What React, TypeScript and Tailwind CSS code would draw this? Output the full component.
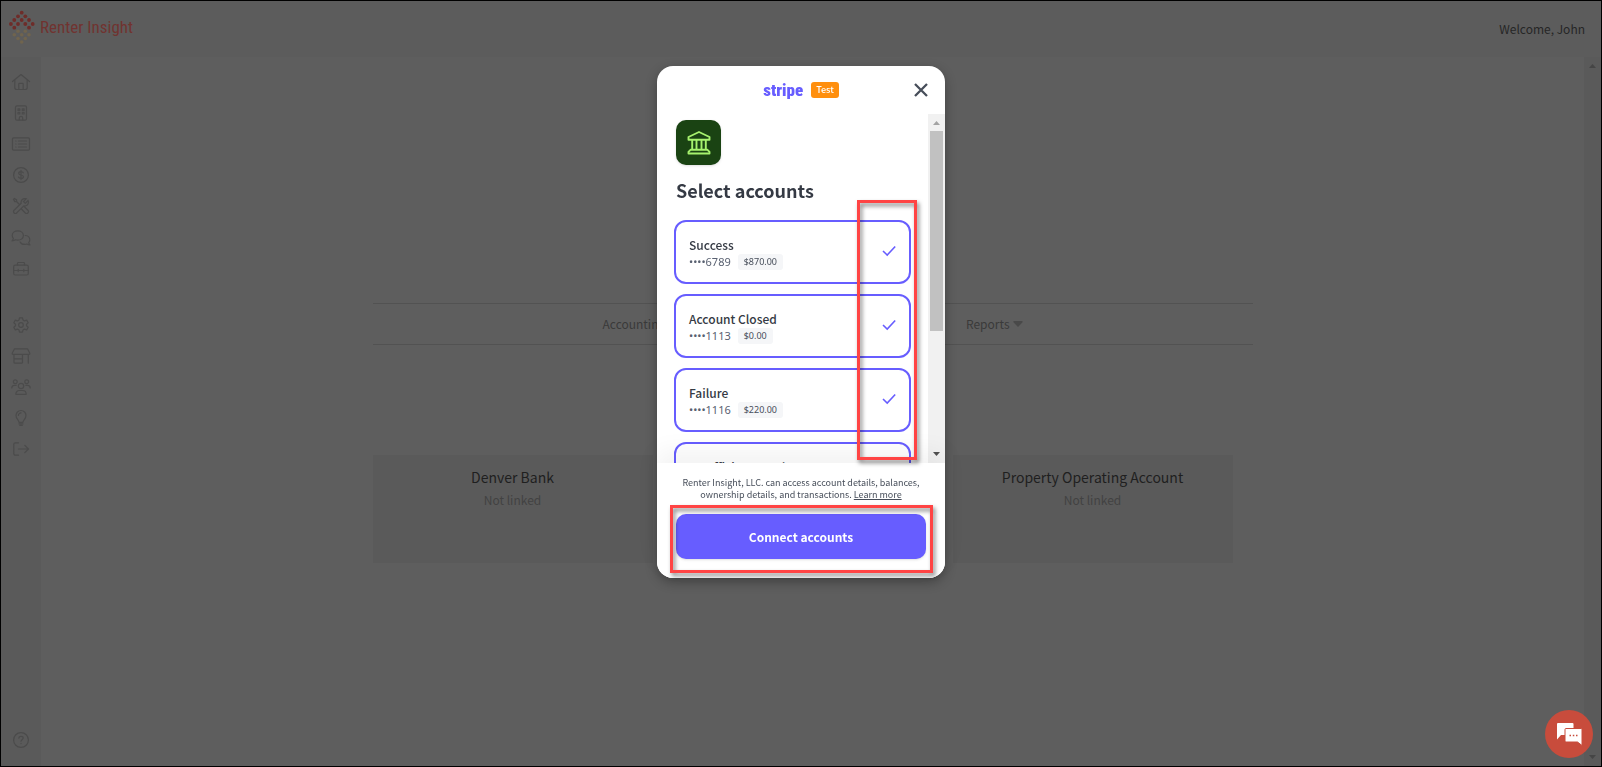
import type { ReactNode } from 'react';
import { LiaToolsSolid } from 'react-icons/lia';

const Icon = ({ children }: { children: ReactNode }) => (
    <svg
        viewBox="0 0 20 20"
        className="w-5 h-5"
        fill="none"
        stroke="currentColor"
        strokeWidth="1.2"
        strokeLinecap="round"
        strokeLinejoin="round"
        aria-hidden="true"
    >
        {children}
    </svg>
);

const mainItems = [
    {
        key: 'Home',
        icon: <Icon><path d="M1.5 9.5 10 2.5l8.5 7M3.8 8v7.5a2 2 0 0 0 2 2h8.4a2 2 0 0 0 2-2V8M7.8 17.3v-5.3a.7.7 0 0 1 .7-.7h3a.7.7 0 0 1 .7.7v5.3" /></Icon>
    },
    {
        key: 'Properties',
        icon: (
            <Icon>
                <rect x="4.5" y="2.8" width="11" height="14.4" rx="1.5" />
                <path d="M7 5.8h1.8v1.6H7zM11.3 5.8h1.8v1.6h-1.8zM7 9.4h1.8V11H7zM11.3 9.4h1.8V11h-1.8zM8.3 17v-2a1.7 1.7 0 0 1 3.4 0v2" />
            </Icon>
        )
    },
    {
        key: 'Listings',
        icon: (
            <Icon>
                <rect x="1.5" y="3.8" width="17" height="12.4" rx="1.2" />
                <path d="M4.8 7h.2M4.8 10h.2M4.8 13h.2M7.5 7h8M7.5 10h8M7.5 13h8" />
            </Icon>
        )
    },
    {
        key: 'Payments',
        icon: (
            <Icon>
                <circle cx="10" cy="10" r="7.4" />
                <path d="M12.3 7.8c-.4-.8-1.2-1.2-2.3-1.2-1.3 0-2.3.6-2.3 1.7 0 2.3 4.8 1.2 4.8 3.5 0 1.1-1.1 1.7-2.5 1.7-1.2 0-2.1-.5-2.5-1.4M10 5.4v9.2" />
            </Icon>
        )
    },
    { key: 'Maintenance', icon: <LiaToolsSolid className="w-5 h-5" /> },
    {
        key: 'Messages',
        icon: (
            <Icon>
                <path d="M6.8 3.8c3.2 0 5.6 2 5.6 4.7s-2.4 4.7-5.6 4.7c-.9 0-1.7-.1-2.4-.4-1 .7-2.2 1-3.4 1 .7-.7 1.2-1.5 1.4-2.5A4.3 4.3 0 0 1 1.2 8.5c0-2.7 2.4-4.7 5.6-4.7z" />
                <path d="M14.2 8.5c2.6.2 4.6 2 4.6 4.3 0 1.1-.4 2-1.1 2.8.2 1 .6 1.7 1.3 2.3-1.1 0-2.2-.3-3.1-.9-.7.3-1.4.4-2.2.4-2.1 0-3.9-1-4.6-2.5" />
            </Icon>
        )
    },
    {
        key: 'Vendors',
        icon: (
            <Icon>
                <rect x="2.7" y="7.2" width="14.6" height="9.8" rx="1.5" />
                <path d="M6.5 7V5.3a.8.8 0 0 1 .8-.8h5.4a.8.8 0 0 1 .8.8V7M2.8 12.5h3.5M8 12.5h4M13.7 12.5h3.5M7.2 11.4v2.2M12.8 11.4v2.2" />
            </Icon>
        )
    }
];

const adminItems = [
    {
        key: 'Settings',
        icon: (
            <Icon>
                <circle cx="10" cy="10" r="2.3" />
                <path d="M8.5 2.8h3l.5 2.2 1.5.9 2.2-.8 1.5 2.6-1.7 1.5v1.6l1.7 1.5-1.5 2.6-2.2-.8-1.5.9-.5 2.2h-3L8 15l-1.5-.9-2.2.8-1.5-2.6 1.7-1.5V9.2L2.8 7.7l1.5-2.6 2.2.8L8 5z" />
            </Icon>
        )
    },
    {
        key: 'Store',
        icon: <Icon><path d="M3.5 2.8h13l2.3 4.4a.8.8 0 0 1-.7 1.2H1.9a.8.8 0 0 1-.7-1.2zM3 8.5v7.7a1 1 0 0 0 1 1h6.5a1 1 0 0 0 1-1V8.5M3 12.8h8.5M17.3 8.5v8.7" /></Icon>
    },
    {
        key: 'Users',
        icon: (
            <Icon>
                <circle cx="10" cy="9" r="2.7" />
                <circle cx="4.3" cy="4.8" r="1.9" />
                <circle cx="15.7" cy="4.8" r="1.9" />
                <path d="M4.8 17.3c0-2.4 1.6-3.8 3.5-3.8h3.4c1.9 0 3.5 1.4 3.5 3.8zM.8 11c0-1.7 1.2-2.7 2.7-2.7h1.7M19.2 11c0-1.7-1.2-2.7-2.7-2.7h-1.7" />
            </Icon>
        )
    },
    {
        key: 'Ideas',
        icon: <Icon><path d="M8 14.3c0-2.2-3-3.5-3-6.8a5 5 0 0 1 10 0c0 3.3-3 4.6-3 6.8zM8 15.8h4M8.8 17.4h2.4M7.4 7.5A2.6 2.6 0 0 1 10 4.9" /></Icon>
    },
    {
        key: 'Log out',
        icon: <Icon><path d="M7.5 3.8H4.3a1.5 1.5 0 0 0-1.5 1.5v9.4a1.5 1.5 0 0 0 1.5 1.5h3.2M7.5 10h10M13.8 6.3l3.7 3.7-3.7 3.7" /></Icon>
    }
];

const helpItem = {
    key: 'Help',
    icon: (
        <Icon>
            <circle cx="10" cy="10" r="7.4" />
            <path d="M7.9 8.2c0-1.2 1-1.9 2.1-1.9 1.2 0 2.2.7 2.2 1.8 0 1.5-2.2 1.6-2.2 3.1M10 13.4v.2" />
        </Icon>
    )
};

const bankAccounts = [
    { name: 'Denver Bank', status: 'Not linked' },
    // sits behind the dialog
    { name: '', status: '' },
    { name: 'Property Operating Account', status: 'Not linked' }
];

const stripeAccounts: { name: string; last4?: string; balance?: string }[] = [
    { name: 'Success', last4: '6789', balance: '$870.00' },
    { name: 'Account Closed', last4: '1113', balance: '$0.00' },
    { name: 'Failure', last4: '1116', balance: '$220.00' },
    { name: 'Insufficient Funds' }
];

// [x, y] of each dot in the diamond, red on top and tan below
const redDots = [
    [12.7, 2.7], [9, 6.3], [16.3, 6.3], [5.3, 10], [12.7, 10], [20, 10],
    [1.9, 14], [9, 14], [16.3, 14], [23.7, 14], [5.3, 17.7], [20, 17.7]
];
const tanDots = [[9, 21.3], [16.3, 21.3], [5.3, 24.7], [12.7, 24.7], [20, 24.7], [9, 28.5], [16.3, 28.5], [12.7, 32]];

const Logo = () => (
    <div className="flex items-center gap-[5px] pb-1">
        <svg viewBox="0 0 26 34" className="w-[26px] h-[34px]" aria-hidden="true">
            {redDots.map(([x, y]) => (
                <circle key={`${x}-${y}`} cx={x} cy={y} r="1.9" fill="#6e2c29" />
            ))}
            {tanDots.map(([x, y]) => (
                <circle key={`${x}-${y}`} cx={x} cy={y} r="1.8" fill="#70644e" />
            ))}
        </svg>
        <span className="font-['Roboto_Condensed',Roboto,sans-serif] text-[17px] leading-6 text-[#713330]">
            Renter Insight
        </span>
    </div>
);

const NavButton = ({ item }: { item: { key: string; icon: ReactNode } }) => (
    <button type="button" aria-label={item.key} className="h-[31px] w-full flex items-center justify-center">
        {item.icon}
    </button>
);

const AccountRow = ({ account }: { account: (typeof stripeAccounts)[number] }) => (
    <label className="flex items-start justify-between h-16 pt-[14px] px-[13px] border-2 border-[#675dff] rounded-xl bg-white">
        <div>
            <div className="text-[12px] leading-[18px] font-medium text-[#353a44]">{account.name}</div>
            {account.last4 && (
                <div className="flex items-center gap-[7px] h-4 font-['Noto_Sans',sans-serif]">
                    <span className="text-[11px] leading-4 text-[#596171]">••••{account.last4}</span>
                    <span className="text-[9px] leading-4 px-[6px] rounded-[3px] bg-[#f5f6f8] text-[#474e5a]">{account.balance}</span>
                </div>
            )}
        </div>
        <input type="checkbox" defaultChecked className="peer sr-only" />
        <svg viewBox="0 0 14 28" className="w-[14px] h-7 invisible peer-checked:visible" fill="none" stroke="#675dff" strokeWidth="1.6" aria-hidden="true">
            <path d="M1 15l4.200 4 8-8.500" />
        </svg>
    </label>
);

const ConnectDialog = () => (
    <div role="dialog" aria-label="Select accounts" className="relative w-72 h-[512px] flex flex-col rounded-2xl bg-white shadow-[0_4px_12px_rgba(0,0,0,0.3)]">
        <div className="h-12 shrink-0 px-[17px] flex items-center justify-between">
            <span className="w-[14px]" />
            <div className="flex items-center gap-2">
                <span className="font-['Roboto_Condensed',Roboto,sans-serif] font-black text-[17px] leading-5 text-[#675dff]">stripe</span>
                <span className="h-4 px-[5px] rounded-[3px] bg-[#ff8f0e] text-white text-[9px] leading-4 font-medium">Test</span>
            </div>
            <button type="button" aria-label="Close">
                <svg viewBox="0 0 14 14" className="w-[14px] h-[14px]" stroke="#474e5a" strokeWidth="2.3" aria-hidden="true">
                    <path d="M1 1l12 12M13 1L1 13" />
                </svg>
            </button>
        </div>

        <div className="flex-1 min-h-0 flex">
            <div className="flex-1 overflow-hidden pt-[6px] px-[17px]">
                <div className="pl-[2px]">
                    <div className="w-[45px] h-[45px] rounded-[10px] bg-[#1a4313] shadow flex items-center justify-center">
                        <svg viewBox="0 0 24 24" className="w-6 h-6" fill="none" stroke="#a6f26e" strokeWidth="1.9" strokeLinejoin="round" aria-hidden="true">
                            <path d="M12 1l10.5 5v2.7h-21V6zM5.2 8.7v9.5M9.500 8.700v9.500M14.500 8.700v9.500M18.800 8.700v9.500M3.500 18.800h17l2 2v1.700h-21v-1.700z" />
                        </svg>
                    </div>
                    <h1 className="mt-[13px] mb-[18px] text-[18px] leading-6 font-bold text-[#353a44]">Select accounts</h1>
                </div>
                <div className="flex flex-col gap-[10px]">
                    {stripeAccounts.map((account) => (
                        <AccountRow key={account.name} account={account} />
                    ))}
                </div>
            </div>

            {/* Scrollbar */}
            <div className="w-[17px] bg-[#f1f1f1] flex flex-col items-center">
                <svg viewBox="0 0 17 17" className="w-[17px] h-[17px]" aria-hidden="true">
                    <path d="M5 11l3.5-4 3.5 4z" fill="#a3a3a3" />
                </svg>
                <div className="w-[13px] h-[200px] bg-[#c1c1c1]" />
                <svg viewBox="0 0 17 17" className="w-[17px] h-[17px] mt-auto" aria-hidden="true">
                    <path d="M5 6l3.5 4 3.5-4z" fill="#505050" />
                </svg>
            </div>
        </div>

        <div className="relative shrink-0 pt-[14px] px-[19px] pb-[19px] rounded-b-2xl bg-white text-center shadow-[0_-12px_24px_rgba(0,0,0,0.05)]">
            <p className="-mx-2 text-[9px] leading-3 text-[#474e5a]">
                Renter Insight, LLC. can access account details, balances,
                <br />
                ownership details, and transactions. <a href="#" className="underline">Learn more</a>
            </p>
            <button type="button" className="mt-[13px] w-full h-[45px] rounded-[10px] bg-[#675dff] text-white text-[12px] font-bold shadow">
                Connect accounts
            </button>
        </div>

        {/* Callouts */}
        <div className="absolute left-[200px] top-[134px] w-[60px] h-[260px] border-3 border-[#ff4444] drop-shadow-[2px_3px_2px_rgba(0,0,0,0.5)] pointer-events-none" />
        <div className="absolute left-[13px] top-[439px] w-[263px] h-[68px] border-3 border-[#ff4444] drop-shadow-[2px_3px_2px_rgba(0,0,0,0.5)] pointer-events-none" />
    </div>
);

const App = () => {
    return (
        <div className="min-h-screen flex flex-col border border-black bg-[#5e5e5e] font-['Noto_Sans_CJK_SC','Noto_Sans',sans-serif] text-[12px]">
            <header className="h-14 shrink-0 pl-2 pr-4 flex items-center justify-between bg-[#5c5c5c]">
                <Logo />
                <span className="text-[#262626]">Welcome, John</span>
            </header>

            <div className="flex-1 flex">
                <nav className="w-10 pt-[9px] pb-[11px] flex flex-col bg-[#5a5a5a] text-[#4b4b4b]">
                    {mainItems.map((item) => (
                        <NavButton key={item.key} item={item} />
                    ))}
                    <div className="h-[26px]" />
                    {adminItems.map((item) => (
                        <NavButton key={item.key} item={item} />
                    ))}
                    <div className="mt-auto">
                        <NavButton item={helpItem} />
                    </div>
                </nav>

                <main className="flex-1 pt-[246px]">
                    <div className="max-w-[880px] mx-auto">
                        <div className="h-[42px] border-y border-[#525252] flex items-center justify-center text-[#3a3a3a]">
                            <div className="w-[420px] flex items-center justify-between">
                                <a href="#">Accounting</a>
                                <a href="#" className="flex items-center gap-[3px]">
                                    Reports
                                    <svg viewBox="0 0 10 6" className="w-[10px] h-[6px]" fill="#494949" aria-hidden="true">
                                        <path d="M1 0h8a.7.7 0 0 1 .5 1.2L5.5 5.6a.7.7 0 0 1-1 0L.5 1.2A.7.7 0 0 1 1 0z" />
                                    </svg>
                                </a>
                            </div>
                        </div>
                        <div className="mt-[110px] flex gap-[10px]">
                            {bankAccounts.map((account, i) => (
                                <div key={i} className="w-[280px] h-[108px] pt-3 bg-[#5a5a5a] text-center">
                                    <div className="text-[14px] leading-5 text-[#1f1f1f]">{account.name}</div>
                                    <div className="mt-[3px] leading-5 text-[#424242]">{account.status}</div>
                                </div>
                            ))}
                        </div>
                    </div>
                </main>

                <div className="w-[17px] flex flex-col justify-between bg-[#5a5a5a]">
                    <svg viewBox="0 0 17 17" className="w-[17px] h-[17px]" fill="#454545" aria-hidden="true">
                        <path d="M5 11l3.5-4 3.5 4z" />
                    </svg>
                    <svg viewBox="0 0 17 17" className="w-[17px] h-[17px]" fill="#454545" aria-hidden="true">
                        <path d="M5 6l3.5 4 3.5-4z" />
                    </svg>
                </div>
            </div>

            <div className="fixed inset-0 pt-[66px] flex items-start justify-center">
                <ConnectDialog />
            </div>

            <button type="button" aria-label="Chat" className="fixed right-[9px] bottom-[9px] w-12 h-12 rounded-full bg-[#c84c3c] flex items-center justify-center">
                <svg viewBox="0 0 26 24" className="w-[26px] h-6" aria-hidden="true">
                    <path d="M1.5 1h15a1 1 0 0 1 1 1v11H5l-4 4.5V2z" fill="#fff" />
                    <path d="M10 6.5h15a1 1 0 0 1 1 1V23.5l-4.5-3.5H10a1 1 0 0 1-1-1V7.5a1 1 0 0 1 1-1z" fill="#fff" stroke="#c84c3c" strokeWidth="1" />
                    <path d="M13.5 13.5h1.500M16.800 13.500h1.500M20 13.500h1.500" stroke="#c84c3c" strokeWidth="1.3" />
                </svg>
            </button>
        </div>
    );
};

export default App;
